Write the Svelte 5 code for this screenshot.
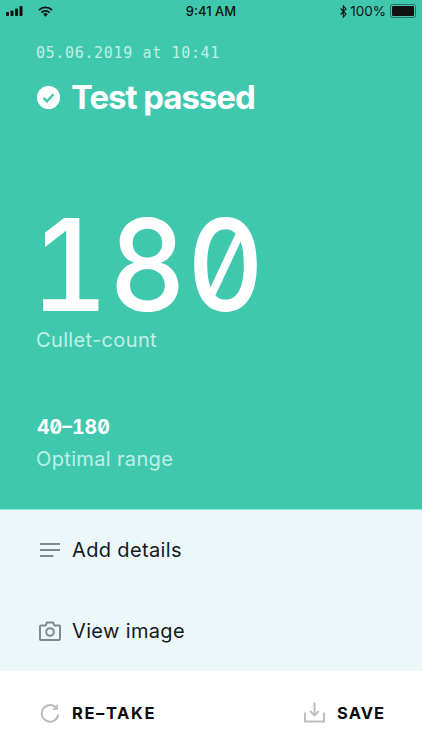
<script>
    const actions = [
        { label: "Add details", icon: "lines" },
        { label: "View image", icon: "camera" }
    ];
</script>

<div class="page">
    <section class="result">
        <div class="status">
            <div class="status-left">
                <svg class="signal" width="18" height="10" viewBox="0 0 18 10">
                    <rect x="0" y="6" width="3" height="4" rx="0.8" />
                    <rect x="4.5" y="4.5" width="3" height="5.5" rx="0.8" />
                    <rect x="9" y="2.5" width="3" height="7.5" rx="0.8" />
                    <rect x="13.5" y="0" width="3" height="10" rx="0.8" />
                </svg>
                <svg class="wifi" width="15" height="11" viewBox="0 0 15 11">
                    <path d="M0.3 3.4a10.2 10.2 0 0 1 14.4 0l-1.3 1.3a8.4 8.4 0 0 0-11.8 0z" />
                    <path d="M2.8 5.9a6.7 6.7 0 0 1 9.4 0l-1.3 1.3a4.9 4.9 0 0 0-6.8 0z" />
                    <path d="M5.2 8.3a3.2 3.2 0 0 1 4.6 0l-2.3 2.4z" />
                </svg>
            </div>
            <span class="time">9:41 AM</span>
            <div class="status-right">
                <svg width="7" height="13" viewBox="0 0 7 13" fill="none" stroke="#111" stroke-width="1.1">
                    <path d="M0.6 3.5l5.4 5.6-2.7 3V0.9l2.7 3-5.4 5.6" />
                </svg>
                <span>100%</span>
                <div class="battery"><div class="battery-fill"></div></div>
            </div>
        </div>

        <p class="date">05.06.2019 at 10:41</p>
        <div class="title">
            <svg width="23" height="23" viewBox="0 0 23 23">
                <circle cx="11.5" cy="11.5" r="11.5" fill="#fff" />
                <path d="M6.5 11.8l3.5 3.5 6.5-7" fill="none" stroke="#40c8ae" stroke-width="2.4" />
            </svg>
            <h1>Test passed</h1>
        </div>

        <div class="count">180</div>
        <p class="caption">Cullet-count</p>

        <div class="range">40–180</div>
        <p class="caption range-caption">Optimal range</p>
    </section>

    <section class="actions">
        {#each actions as action}
            <div class="action">
                {#if action.icon === "lines"}
                    <svg width="22" height="16" viewBox="0 0 22 16" fill="none" stroke="#7e8a8e" stroke-width="2">
                        <path d="M1 2h20M1 8h20M1 14h13.5" />
                    </svg>
                {:else}
                    <svg width="22" height="20" viewBox="0 0 22 20" fill="none" stroke="#7e8a8e" stroke-width="2">
                        <path d="M2 4.500h4.500l1.500-3h6l1.500 3H20a1 1 0 0 1 1 1V18a1 1 0 0 1-1 1H2a1 1 0 0 1-1-1V5.500a1 1 0 0 1 1-1z" />
                        <circle cx="11" cy="11" r="3.800" />
                    </svg>
                {/if}
                <span>{action.label}</span>
            </div>
        {/each}
    </section>

    <section class="footer">
        <div class="footer-btn">
            <svg width="20" height="20" viewBox="0 0 20 20" fill="none" stroke="#bcbcbc" stroke-width="2">
                <path d="M16.800 5.500a8.300 8.300 0 1 0 1.500 6" />
                <path d="M18 0.800v6h-6" fill="#bcbcbc" stroke="none" />
            </svg>
            <span>RE–TAKE</span>
        </div>
        <div class="footer-btn save">
            <svg width="21" height="21" viewBox="0 0 22 22" fill="none" stroke="#bcbcbc" stroke-width="2">
                <path d="M1 11v9.500h20V11" />
                <path d="M11 0.500v13.500M6.500 9.500l4.500 4.500 4.500-4.500" />
            </svg>
            <span>SAVE</span>
        </div>
    </section>
</div>

<style>
    :global(body) {
        margin: 0;
        background: #fff;
    }

    .page {
        width: 422px;
        height: 750px;
        display: flex;
        flex-direction: column;
        font-family: Inter, "Liberation Sans", sans-serif;
        overflow: hidden;
    }

    p,
    h1 {
        margin: 0;
    }

    .result {
        height: 510px;
        box-sizing: border-box;
        padding: 0 37px;
        background: #40c8ae;
        border-bottom: 1px solid #8fe6d6;
        display: flex;
        flex-direction: column;
        align-items: flex-start;
    }

    .status {
        align-self: stretch;
        height: 22px;
        margin: 0 -31px;
        display: grid;
        grid-template-columns: 1fr auto 1fr;
        align-items: center;
        color: #111;
        font-size: 13px;
        font-weight: 500;
    }

    .status-left {
        display: flex;
        align-items: center;
        gap: 14px;
    }

    .signal,
    .wifi {
        fill: #111;
    }

    .status-right {
        display: flex;
        justify-content: flex-end;
        align-items: center;
        gap: 3px;
        font-weight: 400;
        font-size: 13.500px;
    }

    .battery {
        width: 22px;
        height: 10px;
        margin-left: 1px;
        padding: 1px;
        border: 1px solid #2a6f61;
        border-radius: 2.500px;
        box-sizing: content-box;
    }

    .battery-fill {
        height: 100%;
        background: #111;
        border-radius: 1px;
    }

    .date {
        margin-top: 21px;
        margin-left: -1px;
        font-family: "DejaVu Sans Mono", monospace;
        font-size: 15px;
        line-height: 20px;
        letter-spacing: 0.650px;
        color: #bff0e5;
    }

    .title {
        margin-top: 12px;
        display: flex;
        align-items: center;
        gap: 11px;
    }

    h1 {
        font-size: 33px;
        line-height: 44px;
        font-weight: 700;
        letter-spacing: -1.050px;
        color: #fff;
    }

    .count {
        margin-top: 85px;
        margin-left: -6px;
        font-size: 128px;
        font-weight: 500;
        line-height: 122px;
        letter-spacing: 1px;
        font-feature-settings: "zero", "tnum";
        transform: scaleX(0.93);
        transform-origin: left center;
        color: #fff;
    }

    .caption {
        margin-left: -1px;
        font-size: 20px;
        line-height: 28px;
        letter-spacing: 0.350px;
        color: #bff0e5;
    }

    .range {
        margin-top: 60px;
        font-size: 19.500px;
        font-weight: 700;
        line-height: 26px;
        font-feature-settings: "zero", "tnum";
        color: #fff;
    }

    .range-caption {
        margin-top: 5px;
    }

    .actions {
        height: 161px;
        background: #ebf7f9;
        display: flex;
        flex-direction: column;
    }

    .action {
        flex: 1;
        display: flex;
        align-items: center;
        gap: 11px;
        padding-left: 39px;
        font-size: 20px;
        letter-spacing: 0.350px;
        color: #15191c;
    }

    .footer {
        flex: 1;
        display: flex;
        justify-content: space-between;
        align-items: center;
        padding: 4px 37px 0 40px;
        background: #fff;
    }

    .footer-btn {
        display: flex;
        align-items: center;
        gap: 12px;
        font-size: 16.500px;
        font-weight: 700;
        letter-spacing: 1.600px;
        color: #0d0d0d;
    }

    .save {
        letter-spacing: 1px;
    }
</style>
